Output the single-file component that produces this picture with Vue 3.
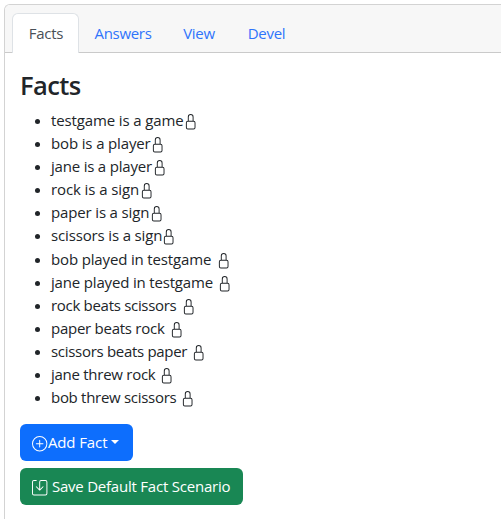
<script setup>
const tabs = [
  { label: 'Facts', width: 67 },
  { label: 'Answers', width: 87 },
  { label: 'View', width: 65 },
  { label: 'Devel', width: 70 }
]
const facts = [
  { text: 'testgame is a game', width: 132, spacing: -0.13 },
  { text: 'bob is a player', width: 99, spacing: -0.14 },
  { text: 'jane is a player', width: 101, spacing: -0.2 },
  { text: 'rock is a sign', width: 88, spacing: -0.1 },
  { text: 'paper is a sign', width: 98, spacing: -0.15 },
  { text: 'scissors is a sign', width: 110, spacing: -0.15 },
  { text: 'bob played in testgame', width: 165, spacing: -0.15 },
  { text: 'jane played in testgame', width: 166, spacing: -0.17 },
  { text: 'rock beats scissors', width: 130, spacing: -0.3 },
  { text: 'paper beats rock', width: 118, spacing: -0.26 },
  { text: 'scissors beats paper', width: 140, spacing: -0.3 },
  { text: 'jane threw rock', width: 108, spacing: -0.27 },
  { text: 'bob threw scissors', width: 129, spacing: -0.29 }
]
</script>

<template>
  <main class="card">
    <nav class="tabs">
      <a v-for="(tab, i) in tabs" :key="tab.label" class="tab" :class="{ active: i === 0 }" :style="{ width: tab.width + 'px' }">{{ tab.label }}</a>
    </nav>
    <section class="body">
      <h3>Facts</h3>
      <ul>
        <li v-for="fact in facts" :key="fact.text">
          <span class="fact" :style="{ width: fact.width + 'px', letterSpacing: fact.spacing + 'px' }">{{ fact.text }}</span>
          <svg class="icon" viewBox="0 0 16 16"><path d="M8 1a2 2 0 0 1 2 2v4H6V3a2 2 0 0 1 2-2zm3 6V3a3 3 0 0 0-6 0v4a2 2 0 0 0-2 2v5a2 2 0 0 0 2 2h6a2 2 0 0 0 2-2V9a2 2 0 0 0-2-2zM5 8h6a1 1 0 0 1 1 1v5a1 1 0 0 1-1 1H5a1 1 0 0 1-1-1V9a1 1 0 0 1 1-1z" /></svg>
        </li>
      </ul>
      <button class="btn add">
        <svg class="icon" viewBox="0 0 16 16"><path d="M8 15A7 7 0 1 1 8 1a7 7 0 0 1 0 14zm0 1A8 8 0 1 0 8 0a8 8 0 0 0 0 16z" /><path d="M8 4a.5.5 0 0 1 .5.5v3h3a.5.5 0 0 1 0 1h-3v3a.5.5 0 0 1-1 0v-3h-3a.5.5 0 0 1 0-1h3v-3A.5.5 0 0 1 8 4z" /></svg>
        <span>Add Fact</span>
        <i class="caret"></i>
      </button>
      <button class="btn save">
        <svg class="icon" viewBox="0 0 16 16"><path d="M2 1a1 1 0 0 0-1 1v12a1 1 0 0 0 1 1h12a1 1 0 0 0 1-1V2a1 1 0 0 0-1-1H9.5a1 1 0 0 0-1 1v7.293l2.646-2.647a.5.5 0 0 1 .708.708l-3.5 3.5a.5.5 0 0 1-.708 0l-3.5-3.5a.5.5 0 1 1 .708-.708L7.5 9.293V2a2 2 0 0 1 2-2H14a2 2 0 0 1 2 2v12a2 2 0 0 1-2 2H2a2 2 0 0 1-2-2V2a2 2 0 0 1 2-2h2.5a.5.5 0 0 1 0 1H2z" /></svg>
        <span>Save Default Fact Scenario</span>
      </button>
    </section>
  </main>
</template>

<style>
body { background: #fff; overflow: hidden; }
</style>

<style scoped>
* { box-sizing: border-box; }
.card {
  margin: 4px 0 0 4px;
  height: 515px;
  border: 1px solid #d3d3d3;
  border-right: 0;
  border-bottom: 0;
  border-radius: 6px 0 0 0;
  overflow: hidden;
  color: #212529;
  font-family: "Open Sans", "Noto Sans", sans-serif;
  font-size: 15px;
}
.tabs {
  display: flex;
  height: 48px;
  padding: 8px 0 0 7px;
  background: #f7f7f7;
  border-bottom: 1px solid #cacaca;
}
.tab {
  height: 40px;
  line-height: 41px;
  text-align: center;
  color: #2f74fb;
  letter-spacing: -0.3px;
  padding-left: 1px;
}
.tab.active {
  color: #495057;
  background: #fff;
  border: 1px solid #dee2e6;
  border-bottom: 0;
  border-radius: 6px 6px 0 0;
  line-height: 39px;
}
.body { padding: 16px 15px; }
h3 {
  margin: 0;
  height: 40px;
  font-size: 25.5px;
  font-weight: 600;
  line-height: 32px;
  letter-spacing: -0.6px;
}
ul { margin: 0 0 15px; padding-left: 15px; list-style: none; }
li { display: flex; height: 23.1px; line-height: 23.1px; white-space: nowrap; }
li::before {
  content: "";
  flex: none;
  width: 5px;
  height: 5px;
  margin: 10px 11px 0 0;
  border-radius: 50%;
  background: #212529;
}
.fact { display: block; flex: none; height: 23px; }
.icon { width: 15.4px; height: 15.4px; fill: currentColor; flex: none; overflow: visible; }
li .icon { margin-top: 5px; }
.btn {
  display: flex;
  align-items: center;
  height: 37px;
  padding: 0 12px;
  border: 0;
  border-radius: 6px;
  color: #fff;
  font: inherit;
  white-space: nowrap;
}
.btn .icon { margin-top: 2.5px; }
.btn span { margin-top: -1px; }
.add { width: 113px; background: #0d6efd; letter-spacing: -0.1px; }
.add span { margin-left: 0.5px; }
.caret {
  margin: -2px 0 0 4px;
  border: 4.8px solid transparent;
  border-top-color: #fff;
  border-bottom: 0;
}
.save { width: 223px; margin-top: 7px; gap: 4.5px; background: #198754; letter-spacing: -0.22px; }
</style>
